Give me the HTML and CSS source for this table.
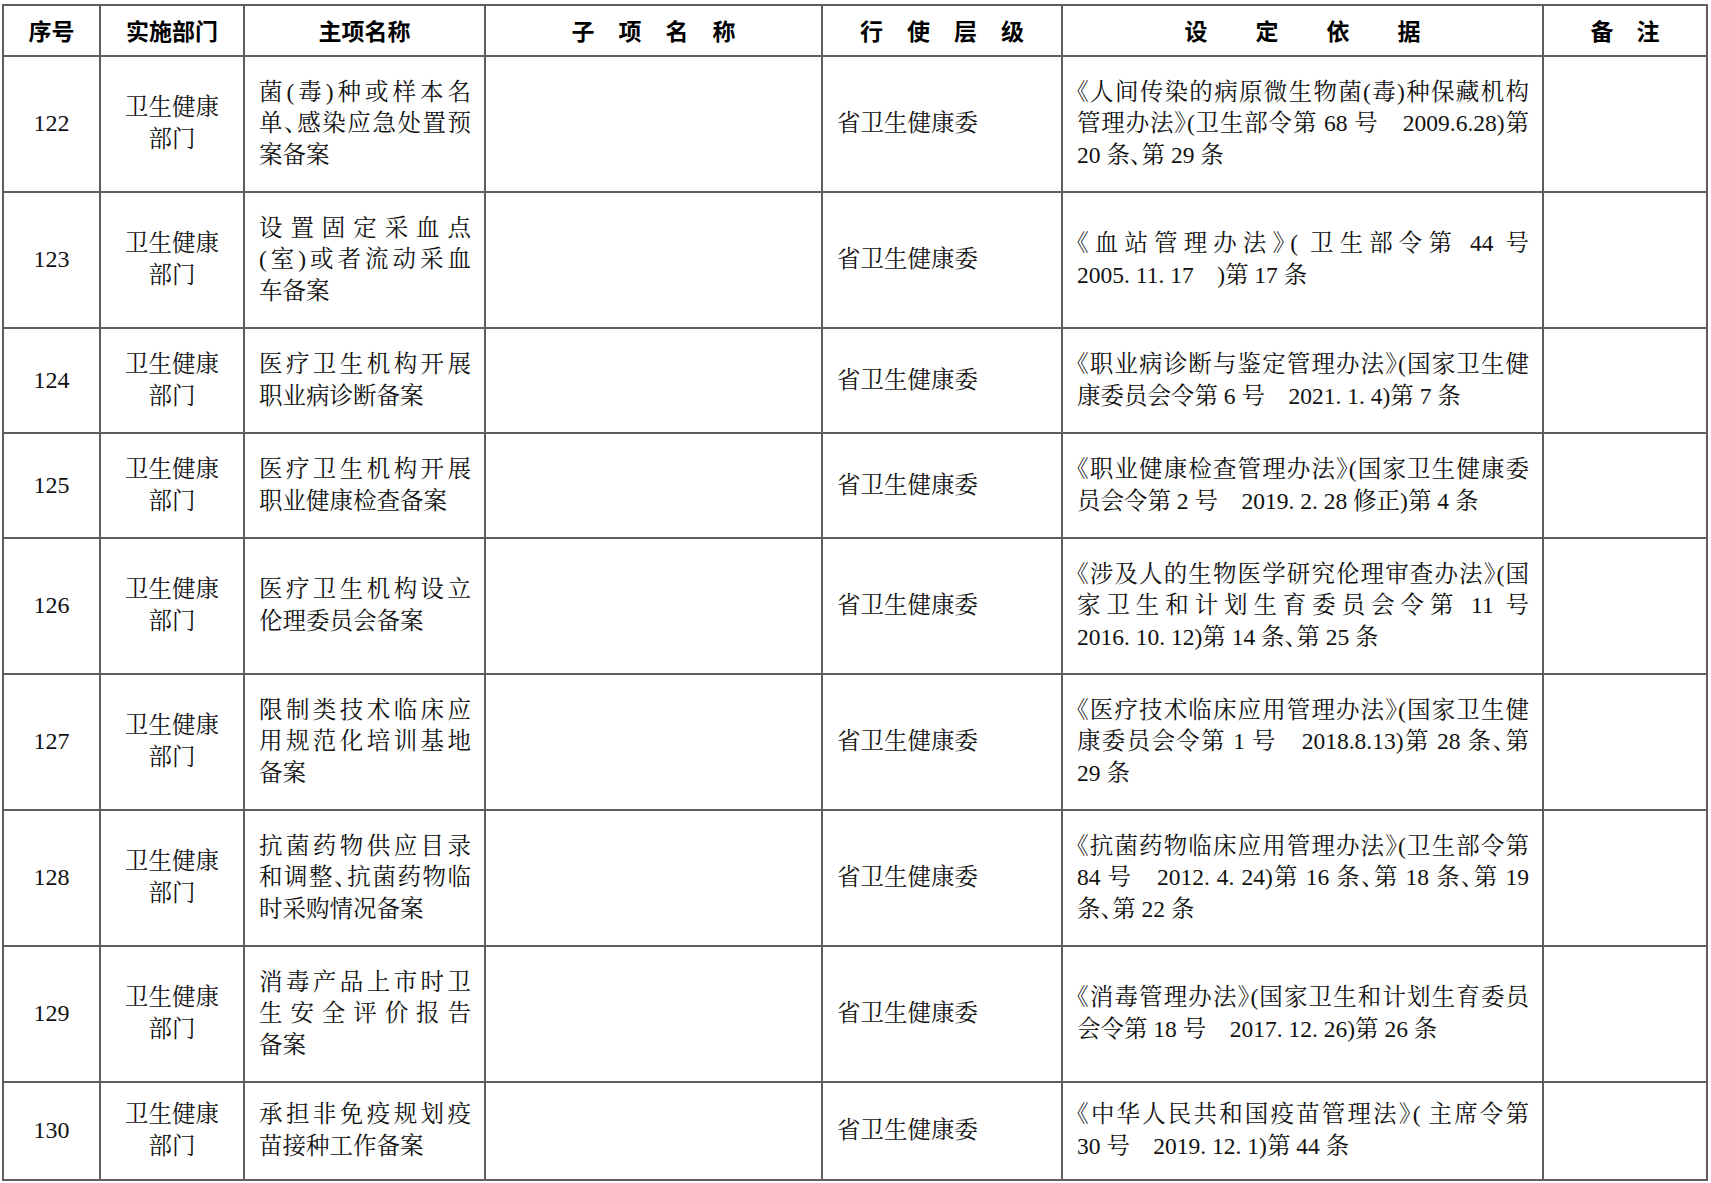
FILE: index.html
```html
<!DOCTYPE html>
<html lang="zh-CN">
<head>
<meta charset="utf-8">
<title>备案事项</title>
<link rel="stylesheet" href="styles.css">
</head>
<body>
<div class="page">
<table class="grid">
  <colgroup>
    <col class="c-no"><col class="c-dept"><col class="c-main"><col class="c-sub"><col class="c-level"><col class="c-basis"><col class="c-note">
  </colgroup>
  <thead>
    <tr class="hd">
      <th>序号</th>
      <th>实施部门</th>
      <th>主项名称</th>
      <th class="sp24">子项名称</th>
      <th class="sp24">行使层级</th>
      <th class="sp48">设定依据</th>
      <th class="sp23">备注</th>
    </tr>
  </thead>
  <tbody>
    <tr class="r3">
      <td class="no">122</td>
      <td class="dept">卫生健康<br>部门</td>
      <td class="txt"><span class="l j">菌(毒)种或样本名</span><span class="l j">单、感染应急处置预</span><span class="l">案备案</span></td>
      <td></td>
      <td class="txt">省卫生健康委</td>
      <td class="txt"><span class="l j">《人间传染的病原微生物菌(毒)种保藏机构</span><span class="l j">管理办法》(卫生部令第 68 号　2009.6.28)第</span><span class="l">20 条、第 29 条</span></td>
      <td></td>
    </tr>
    <tr class="r3">
      <td class="no">123</td>
      <td class="dept">卫生健康<br>部门</td>
      <td class="txt"><span class="l j">设置固定采血点</span><span class="l j">(室)或者流动采血</span><span class="l">车备案</span></td>
      <td></td>
      <td class="txt">省卫生健康委</td>
      <td class="txt"><span class="l j">《血站管理办法》( 卫生部令第 44 号</span><span class="l">2005. 11. 17　)第 17 条</span></td>
      <td></td>
    </tr>
    <tr class="r2">
      <td class="no">124</td>
      <td class="dept">卫生健康<br>部门</td>
      <td class="txt"><span class="l j">医疗卫生机构开展</span><span class="l">职业病诊断备案</span></td>
      <td></td>
      <td class="txt">省卫生健康委</td>
      <td class="txt"><span class="l j">《职业病诊断与鉴定管理办法》(国家卫生健</span><span class="l">康委员会令第 6 号　2021. 1. 4)第 7 条</span></td>
      <td></td>
    </tr>
    <tr class="r2">
      <td class="no">125</td>
      <td class="dept">卫生健康<br>部门</td>
      <td class="txt"><span class="l j">医疗卫生机构开展</span><span class="l">职业健康检查备案</span></td>
      <td></td>
      <td class="txt">省卫生健康委</td>
      <td class="txt"><span class="l j">《职业健康检查管理办法》(国家卫生健康委</span><span class="l">员会令第 2 号　2019. 2. 28 修正)第 4 条</span></td>
      <td></td>
    </tr>
    <tr class="r3">
      <td class="no">126</td>
      <td class="dept">卫生健康<br>部门</td>
      <td class="txt"><span class="l j">医疗卫生机构设立</span><span class="l">伦理委员会备案</span></td>
      <td></td>
      <td class="txt">省卫生健康委</td>
      <td class="txt"><span class="l j">《涉及人的生物医学研究伦理审查办法》(国</span><span class="l j">家卫生和计划生育委员会令第 11 号</span><span class="l">2016. 10. 12)第 14 条、第 25 条</span></td>
      <td></td>
    </tr>
    <tr class="r3">
      <td class="no">127</td>
      <td class="dept">卫生健康<br>部门</td>
      <td class="txt"><span class="l j">限制类技术临床应</span><span class="l j">用规范化培训基地</span><span class="l">备案</span></td>
      <td></td>
      <td class="txt">省卫生健康委</td>
      <td class="txt"><span class="l j">《医疗技术临床应用管理办法》(国家卫生健</span><span class="l j">康委员会令第 1 号　2018.8.13)第 28 条、第</span><span class="l">29 条</span></td>
      <td></td>
    </tr>
    <tr class="r3">
      <td class="no">128</td>
      <td class="dept">卫生健康<br>部门</td>
      <td class="txt"><span class="l j">抗菌药物供应目录</span><span class="l j">和调整、抗菌药物临</span><span class="l">时采购情况备案</span></td>
      <td></td>
      <td class="txt">省卫生健康委</td>
      <td class="txt"><span class="l j">《抗菌药物临床应用管理办法》(卫生部令第</span><span class="l j">84 号　2012. 4. 24)第 16 条、第 18 条、第 19</span><span class="l">条、第 22 条</span></td>
      <td></td>
    </tr>
    <tr class="r3">
      <td class="no">129</td>
      <td class="dept">卫生健康<br>部门</td>
      <td class="txt"><span class="l j">消毒产品上市时卫</span><span class="l j">生安全评价报告</span><span class="l">备案</span></td>
      <td></td>
      <td class="txt">省卫生健康委</td>
      <td class="txt"><span class="l j">《消毒管理办法》(国家卫生和计划生育委员</span><span class="l">会令第 18 号　2017. 12. 26)第 26 条</span></td>
      <td></td>
    </tr>
    <tr class="rl">
      <td class="no">130</td>
      <td class="dept">卫生健康<br>部门</td>
      <td class="txt"><span class="l j">承担非免疫规划疫</span><span class="l">苗接种工作备案</span></td>
      <td></td>
      <td class="txt">省卫生健康委</td>
      <td class="txt"><span class="l j">《中华人民共和国疫苗管理法》( 主席令第</span><span class="l">30 号　2019. 12. 1)第 44 条</span></td>
      <td></td>
    </tr>
  </tbody>
</table>
</div>
</body>
</html>
```

FILE: styles.css
```css
html, body {
  margin: 0;
  padding: 0;
  background: #ffffff;
}

.page {
  padding: 4px 0 0 2px;
}

.grid {
  border-collapse: collapse;
  table-layout: fixed;
  width: 1706px;
  border: 2px solid #262626;
  font-family: "Liberation Serif", "Noto Serif CJK SC", "Noto Sans CJK SC", serif;
  font-size: 23.5px;
  line-height: 31.6px;
  color: #111111;
  font-feature-settings: "halt";
}

.c-no { width: 97px; }
.c-dept { width: 144px; }
.c-main { width: 241px; }
.c-sub { width: 337px; }
.c-level { width: 240px; }
.c-basis { width: 481px; }
.c-note { width: 164px; }

.grid th,
.grid td {
  border: 2px solid #5e5e5e;
  padding: 0;
  vertical-align: middle;
}

.grid th {
  font-family: "Noto Sans CJK SC", "Liberation Sans", sans-serif;
  font-weight: 700;
  font-size: 23px;
  color: #000000;
  text-align: center;
  white-space: nowrap;
}

.sp24 { letter-spacing: 24px; padding-left: 24px !important; }
.sp48 { letter-spacing: 48px; padding-left: 48px !important; }
.sp23 { letter-spacing: 23px; padding-left: 23px !important; }

.hd { height: 51px; }
.r3 { height: 136px; }
.r2 { height: 105px; }
.rl { height: 98px; }

.no {
  text-align: center;
  font-size: 24px;
}

.dept {
  text-align: center;
}

.txt {
  padding: 0 13px 0 14px !important;
  text-align: left;
  white-space: nowrap;
}

.l {
  display: block;
  white-space: nowrap;
}

.j {
  text-align: justify;
  text-align-last: justify;
}
```
